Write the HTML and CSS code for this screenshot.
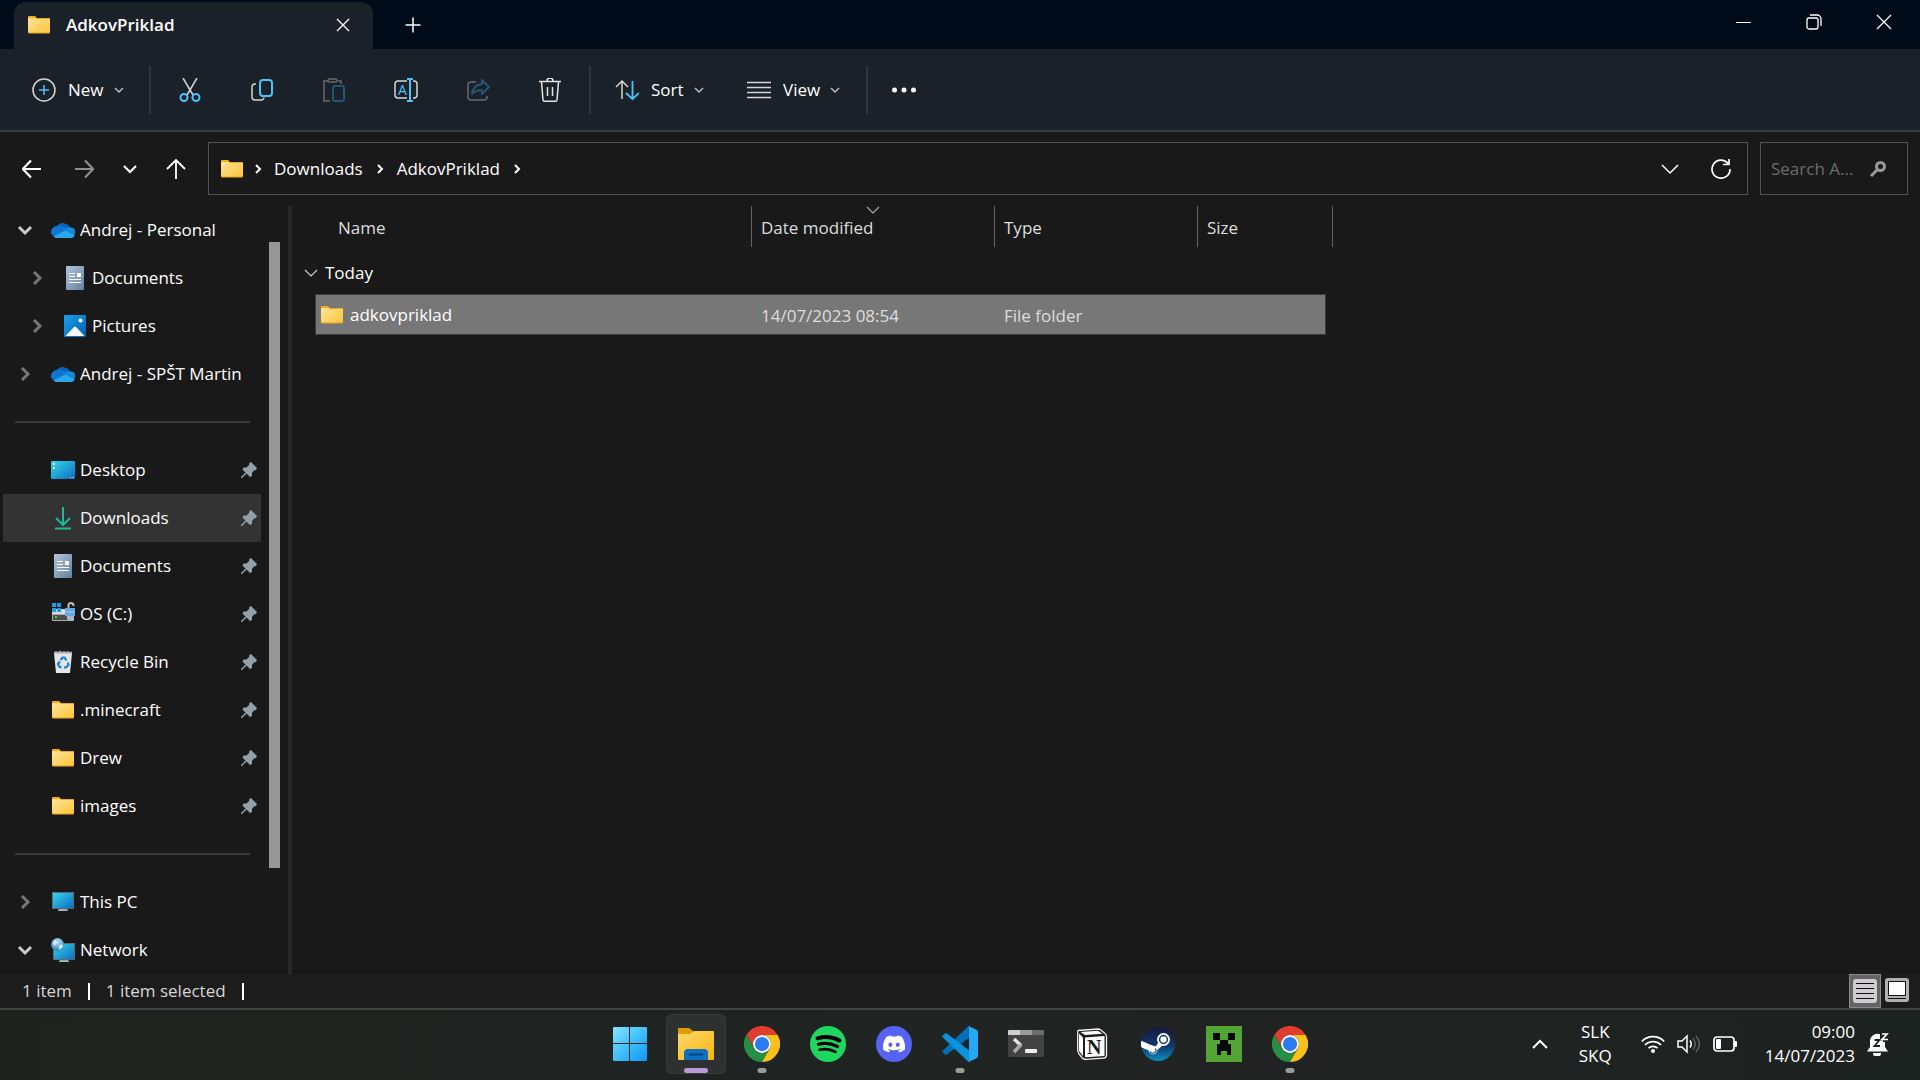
FILE: index.html
```html
<!DOCTYPE html>
<html lang="en">
<head>
<meta charset="utf-8">
<title>AdkovPriklad</title>
<link rel="stylesheet" href="styles.css">
</head>
<body>
<svg class="defs" aria-hidden="true">
  <defs>
    <linearGradient id="g-folder" x1="0" y1="0" x2="1" y2="1"><stop offset="0" stop-color="#ffe49c"/><stop offset="1" stop-color="#fdc536"/></linearGradient>
    <linearGradient id="g-screen" x1="0" y1="0" x2="1" y2="1"><stop offset="0" stop-color="#36d8ea"/><stop offset="1" stop-color="#0a6cc4"/></linearGradient>
    <linearGradient id="g-doc" x1="0" y1="0" x2="1" y2="1"><stop offset="0" stop-color="#b3c4dc"/><stop offset="1" stop-color="#63809f"/></linearGradient>
    <linearGradient id="g-pic" x1="0" y1="0" x2="1" y2="1"><stop offset="0" stop-color="#1aa0ea"/><stop offset="1" stop-color="#0560b0"/></linearGradient>
    <linearGradient id="g-win" x1="0" y1="0" x2="1" y2="1"><stop offset="0" stop-color="#8be3ff"/><stop offset=".5" stop-color="#40c0fb"/><stop offset="1" stop-color="#0d97f8"/></linearGradient>
    <linearGradient id="g-exp" x1="0" y1="0" x2="1" y2="1"><stop offset="0" stop-color="#ffd96e"/><stop offset="1" stop-color="#f8b50a"/></linearGradient>
    <linearGradient id="g-steam" x1="0" y1="0" x2="0" y2="1"><stop offset="0" stop-color="#14183c"/><stop offset=".55" stop-color="#10386c"/><stop offset="1" stop-color="#0c8cc0"/></linearGradient>
    <radialGradient id="g-globe" cx=".5" cy=".3" r=".7"><stop offset="0" stop-color="#b7e2f5"/><stop offset="1" stop-color="#2b7fb8"/></radialGradient>
    <clipPath id="c-steam"><circle cx="18" cy="18" r="17"/></clipPath>
  </defs>
  <symbol id="folder" viewBox="0 0 24 24">
    <path d="M1 4a1 1 0 0 1 1-1h6l2 2v4H1z" fill="#f8ae14"/>
    <rect x="1" y="5" width="22" height="15" rx="1" fill="url(#g-folder)"/>
    <path d="M9 5.500h13.500M1.500 20h21" stroke="#eba81a" fill="none"/>
  </symbol>
  <symbol id="cloud" viewBox="0 0 24 24">
    <path d="M5 9a8 7.500 0 0 1 14.500 1L13 16z" fill="#0c62b8"/>
    <path d="M6.500 8A6 6 0 0 0 1 17l3 2 12-6A9 9 0 0 0 6.500 8z" fill="#1076d2"/>
    <path d="M13 12q3-3.500 7-2.500a4.500 4.500 0 0 1 3.500 7.500z" fill="#1489dc"/>
    <path d="M2.500 18.500 14.500 12.500l9 4.500a3.500 3.500 0 0 1-3.500 3H6q-2 0-3.500-1.500z" fill="#2aa6ec"/>
  </symbol>
  <symbol id="doc" viewBox="0 0 24 24">
    <rect x="3" y="0" width="18" height="24" rx="1" fill="url(#g-doc)"/>
    <path d="M6 7.500h6M6 10.500h6M6 13.500h12M6 16.500h12" stroke="#fff"/><path d="M14 7h4v4h-4z" fill="#fff"/>
  </symbol>
  <symbol id="pic" viewBox="0 0 24 24">
    <rect x="1" y="1" width="22" height="22" rx="1" fill="url(#g-pic)"/>
    <path d="M2.500 22 11 13q1-1 2 0l8.500 9z" fill="#f4f8fe"/><circle cx="17.500" cy="6.500" r="2" fill="#fff"/>
  </symbol>
  <symbol id="desktop" viewBox="0 0 24 24">
    <rect x="0" y="3" width="24" height="18" rx="1" fill="url(#g-screen)"/>
    <path d="M2 5h2v2H2zM2 9h2v2H2z" fill="#fff"/><path d="M19 19.500h1M21.500 19.500h1" stroke="#d6efff"/>
  </symbol>
  <symbol id="down" viewBox="0 0 24 24">
    <path d="M12 1v18M5 12l7 7 7-7M4 22.500h16" fill="none" stroke="#22b893" stroke-width="2"/>
  </symbol>
  <symbol id="drive" viewBox="0 0 24 24">
    <path d="M1 7h22v6H1z" fill="#dadada"/><path d="M1.500 12.500h21v6h-21z" fill="#4c4c4c" stroke="#aaa"/>
    <path d="M1 1h4v4H1zM6 1h4v4H6zM1 6h4v4H1zM6 6h4v4H6z" fill="#1c9ce8"/><path d="M4 14h2v2H4z" fill="#35e03a"/>
    <path d="M17.500 6V3.500a2.500 2.500 0 0 1 5 0V4" fill="none" stroke="#b8bdc4" stroke-width="2"/>
    <rect x="14" y="6" width="10" height="8" fill="#5aaee6"/><path d="M14 9h10v2H14z" fill="#9cb6c9"/><path d="M16 14h7v3l-2 2h-3l-2-2z" fill="#aab6c2"/>
  </symbol>
  <symbol id="bin" viewBox="0 0 24 24">
    <path d="M3 3h18l-2 20H5z" fill="#e3e7eb"/><path d="M3 2l2-1 2 1 2-1.500 2 1.500 2-1 2 1 2-1 2 1 2-.5v2H3z" fill="#a9aeb4"/>
    <path d="M9.500 10l2-2.500h2l2 3M17 12.500l.5 2.500-2.500 2.500h-2M10.500 17.500 8 16.500l-1-2.500 2-2.500" fill="none" stroke="#1583d8" stroke-width="2.200"/>
  </symbol>
  <symbol id="pc" viewBox="0 0 24 24">
    <path d="M7 21h10v-1l-3-2h-4l-3 2z" fill="#9fb0bd"/><rect x="1.500" y="2.500" width="21" height="16" fill="url(#g-screen)" stroke="#5b6a74"/>
  </symbol>
  <symbol id="network" viewBox="0 0 24 24">
    <path d="M8 24h10v-1l-3-2h-4l-3 2z" fill="#9fb0bd"/><rect x="2.500" y="5.500" width="21" height="16" fill="url(#g-screen)" stroke="#5b6a74"/>
    <circle cx="6.500" cy="6.500" r="6.500" fill="url(#g-globe)"/><path d="M2 4l3-2 1 3-3 3zM8 8l3-2 1 3-4 3z" fill="#d9f1fa"/>
  </symbol>
  <symbol id="pin" viewBox="0 0 16 16">
    <path d="M10 0l6 6-1 2-2 .5-2 2.500V14l-2 1-3.500-3.500L1 16H0v-1l4.500-4.500L1.500 7.500l1-2h3L8 3l.5-2z" fill="#93a0a8"/>
  </symbol>
  <symbol id="chev-r" viewBox="0 0 16 16"><path d="M5 2l6 6-6 6" fill="none" stroke="currentColor" stroke-width="3"/></symbol>
  <symbol id="chev-d" viewBox="0 0 16 16"><path d="M2 5l6 6 6-6" fill="none" stroke="currentColor" stroke-width="3"/></symbol>
  <symbol id="thin-d" viewBox="0 0 16 16"><path d="M2 5l6 6 6-6" fill="none" stroke="currentColor" stroke-width="1.200"/></symbol>
  <symbol id="tiny-d" viewBox="0 0 16 16"><path d="M4 6l4 4 4-4" fill="none" stroke="#b9bcc1" stroke-width="1.500"/></symbol>
  <symbol id="crumb" viewBox="0 0 16 16"><path d="M6 4l4 4-4 4" fill="none" stroke="#fff" stroke-width="2"/></symbol>
  <symbol id="chrome" viewBox="0 0 48 48">
    <path d="M13.600 30 3.200 12a24 24 0 0 1 41.600 0H24a12 12 0 0 0-10.400 18z" fill="#e33b2e"/>
    <path d="M3.200 12A24 24 0 0 0 24 48l10.400-18a12 12 0 0 1-20.800 0z" fill="#259045"/>
    <path d="M34.400 30 24 48a24 24 0 0 0 20.800-36H24a12 12 0 0 1 10.400 18z" fill="#fbc116"/>
    <circle cx="24" cy="24" r="12" fill="#fff"/><circle cx="24" cy="24" r="9.500" fill="#2b7af0"/>
  </symbol>
</svg>

<header class="titlebar">
  <div class="tab">
    <svg class="ico"><use href="#folder"/></svg>
    <span class="tab-title">AdkovPriklad</span>
    <button class="plain tab-close" aria-label="Close tab"><svg class="s16" viewBox="0 0 16 16"><path d="M2 2l12 12M14 2 2 14" stroke="#fff" stroke-width="1.300"/></svg></button>
  </div>
  <button class="plain new-tab" aria-label="New tab"><svg class="s16" viewBox="0 0 16 16"><path d="M8 .5v15M.5 8h15" stroke="#fff" stroke-width="1.500"/></svg></button>
  <div class="win-controls">
    <button class="plain" aria-label="Minimize"><svg class="s16" viewBox="0 0 16 16"><path d="M0 8.500h15" stroke="#fff"/></svg></button>
    <button class="plain" aria-label="Restore"><svg class="s16" viewBox="0 0 16 16" fill="none" stroke="#fff" stroke-width="1.300"><rect x="1" y="4" width="11" height="11" rx="2"/><path d="M4 1h7a4 4 0 0 1 4 4v7"/></svg></button>
    <button class="plain" aria-label="Close"><svg class="s16" viewBox="0 0 16 16"><path d="M1 1l14 14M15 1 1 15" stroke="#fff" stroke-width="1.300"/></svg></button>
  </div>
</header>

<div class="toolbar" role="toolbar">
  <button class="plain cmd cmd-new"><svg class="ico" viewBox="0 0 24 24" fill="none" stroke="#d5d5d5" stroke-width="1.500"><circle cx="12" cy="12" r="11"/><path d="M12 7v10M7 12h10" stroke="#4cc2ff"/></svg><span>New</span><svg class="s16"><use href="#tiny-d"/></svg></button>
  <span class="sep"></span>
  <button class="plain tool" aria-label="Cut"><svg class="ico" viewBox="0 0 24 24" fill="none" stroke="#d5d5d5" stroke-width="1.500"><path d="M5 0l10 17M19 0 9 17"/><g stroke="#4cc2ff" stroke-width="2"><circle cx="6" cy="19.500" r="3.500"/><circle cx="18" cy="19.500" r="3.500"/></g></svg></button>
  <button class="plain tool" aria-label="Copy"><svg class="ico" viewBox="0 0 24 24" fill="none" stroke-width="2"><path d="M6 6H5a3 3 0 0 0-3 3v10a3 3 0 0 0 3 3h6a3 3 0 0 0 3-2.500" stroke="#d5d5d5" stroke-width="1.500"/><rect x="10" y="2" width="12" height="16" rx="3" stroke="#4cc2ff"/></svg></button>
  <button class="plain tool" aria-label="Paste" disabled><svg class="ico" viewBox="0 0 24 24" fill="none" stroke="#666b72" stroke-width="1.500"><path d="M6 3H2v20h6M16 3h3v3"/><rect x="6" y="1" width="9" height="3" rx="1.500"/><rect x="11" y="8" width="11" height="15" rx="2" stroke="#245674" stroke-width="2"/></svg></button>
  <button class="plain tool" aria-label="Rename"><svg class="ico" viewBox="0 0 24 24" fill="none" stroke="#d5d5d5" stroke-width="1.500"><path d="M13 3H4a3 3 0 0 0-3 3v11a3 3 0 0 0 3 3h9M19 3h1a3 3 0 0 1 3 3v11a3 3 0 0 1-3 3h-1"/><path d="M16 0v24M13 1h6M13 23h6" stroke="#4cc2ff" stroke-width="2"/><text x="4" y="17" class="glyph-a">A</text></svg></button>
  <button class="plain tool" aria-label="Share" disabled><svg class="ico" viewBox="0 0 24 24" fill="none" stroke="#666b72" stroke-width="1.500"><path d="M10 4H5a3 3 0 0 0-3 3v12a3 3 0 0 0 3 3h13a3 3 0 0 0 3-3v-1"/><path d="M16 2l7 7-7 7v-4q-6 0-10 4 1-9 10-10z" stroke="#245674" stroke-width="2" stroke-linejoin="round"/></svg></button>
  <button class="plain tool" aria-label="Delete"><svg class="ico" viewBox="0 0 24 24" fill="none" stroke="#e4e4e4" stroke-width="1.500"><path d="M1 3.500h22M3.500 4 5 22q.2 1.300 1.500 1.300h11q1.300 0 1.500-1.300L20.500 4M9 3a3 3 0 0 1 6 0M9.500 9v9M14.500 9v9"/></svg></button>
  <span class="sep"></span>
  <button class="plain cmd cmd-sort"><svg class="ico" viewBox="0 0 24 24" fill="none" stroke="#d5d5d5" stroke-width="1.500"><path d="M7 3v18M1 9l6-6 6 6"/><path d="M17.500 3v18M11 15l6.500 6 6.500-6" stroke="#4cc2ff" stroke-width="1.800"/></svg><span>Sort</span><svg class="s16"><use href="#tiny-d"/></svg></button>
  <button class="plain cmd cmd-view"><svg class="ico" viewBox="0 0 24 24" stroke="#d5d8d8" stroke-width="1.600"><path d="M0 4.500h24M0 9.500h24M0 14.500h24M0 19.500h24"/></svg><span>View</span><svg class="s16"><use href="#tiny-d"/></svg></button>
  <span class="sep"></span>
  <button class="plain tool more" aria-label="See more"><svg class="ico" viewBox="0 0 24 24" fill="#fff"><circle cx="2.500" cy="12" r="2.500"/><circle cx="12" cy="12" r="2.500"/><circle cx="21.500" cy="12" r="2.500"/></svg></button>
</div>

<div class="navrow">
  <div class="nav-buttons">
    <button class="plain" aria-label="Back"><svg class="s20" viewBox="0 0 20 20" fill="none" stroke="#fff" stroke-width="2.200"><path d="M1 10h18M9 1.500.8 10 9 18.500"/></svg></button>
    <button class="plain" aria-label="Forward" disabled><svg class="s20" viewBox="0 0 20 20" fill="none" stroke="#8e8e8e" stroke-width="2.200"><path d="M1 10h18M11 1.500l8.200 8.500-8.200 8.500"/></svg></button>
    <button class="plain small" aria-label="Recent locations"><svg class="s16" viewBox="0 0 16 16"><path d="M2 5l6 6 6-6" fill="none" stroke="#fff" stroke-width="2.200"/></svg></button>
    <button class="plain" aria-label="Up"><svg class="s20" viewBox="0 0 20 20" fill="none" stroke="#fff" stroke-width="1.800"><path d="M10 20V1M1 10l9-9 9 9"/></svg></button>
  </div>
  <div class="address">
    <svg class="ico"><use href="#folder"/></svg>
    <svg class="s16"><use href="#crumb"/></svg>
    <a href="#">Downloads</a>
    <svg class="s16"><use href="#crumb"/></svg>
    <a href="#">AdkovPriklad</a>
    <svg class="s16"><use href="#crumb"/></svg>
    <button class="plain history" aria-label="Previous locations"><svg class="s20" viewBox="0 0 20 20"><path d="M2 6l8 8 8-8" fill="none" stroke="#fff" stroke-width="1.500"/></svg></button>
    <button class="plain refresh" aria-label="Refresh"><svg class="s20" viewBox="0 0 20 20" fill="none" stroke="#fff" stroke-width="1.700"><path d="M17 4.500A9 9 0 1 0 19 10M18 0v5.500h-6"/></svg></button>
  </div>
  <div class="search">
    <input type="text" placeholder="Search A..." aria-label="Search AdkovPriklad">
    <svg class="s16" viewBox="0 0 16 16" fill="none" stroke="#999" stroke-width="3"><circle cx="10.500" cy="5.500" r="4"/><path d="M7.500 8.500 1 15"/></svg>
  </div>
</div>

<main class="explorer">
  <nav class="side" aria-label="Folders">
    <ul class="tree">
      <li class="row"><button class="plain twist open" aria-label="Collapse"><svg class="s16"><use href="#chev-d"/></svg></button><a href="#"><svg class="ico"><use href="#cloud"/></svg>Andrej - Personal</a></li>
      <li class="row child"><button class="plain twist" aria-label="Expand"><svg class="s16"><use href="#chev-r"/></svg></button><a href="#"><svg class="ico"><use href="#doc"/></svg>Documents</a></li>
      <li class="row child"><button class="plain twist" aria-label="Expand"><svg class="s16"><use href="#chev-r"/></svg></button><a href="#"><svg class="ico"><use href="#pic"/></svg>Pictures</a></li>
      <li class="row"><button class="plain twist" aria-label="Expand"><svg class="s16"><use href="#chev-r"/></svg></button><a href="#"><svg class="ico"><use href="#cloud"/></svg>Andrej - SPŠT Martin</a></li>
      <li class="row divider"></li>
      <li class="row leaf"><a href="#"><svg class="ico"><use href="#desktop"/></svg>Desktop</a><svg class="pin"><use href="#pin"/></svg></li>
      <li class="row leaf current"><a href="#"><svg class="ico"><use href="#down"/></svg>Downloads</a><svg class="pin"><use href="#pin"/></svg></li>
      <li class="row leaf"><a href="#"><svg class="ico"><use href="#doc"/></svg>Documents</a><svg class="pin"><use href="#pin"/></svg></li>
      <li class="row leaf"><a href="#"><svg class="ico"><use href="#drive"/></svg>OS (C:)</a><svg class="pin"><use href="#pin"/></svg></li>
      <li class="row leaf"><a href="#"><svg class="ico"><use href="#bin"/></svg>Recycle Bin</a><svg class="pin"><use href="#pin"/></svg></li>
      <li class="row leaf"><a href="#"><svg class="ico"><use href="#folder"/></svg>.minecraft</a><svg class="pin"><use href="#pin"/></svg></li>
      <li class="row leaf"><a href="#"><svg class="ico"><use href="#folder"/></svg>Drew</a><svg class="pin"><use href="#pin"/></svg></li>
      <li class="row leaf"><a href="#"><svg class="ico"><use href="#folder"/></svg>images</a><svg class="pin"><use href="#pin"/></svg></li>
      <li class="row divider"></li>
      <li class="row"><button class="plain twist" aria-label="Expand"><svg class="s16"><use href="#chev-r"/></svg></button><a href="#"><svg class="ico"><use href="#pc"/></svg>This PC</a></li>
      <li class="row"><button class="plain twist open" aria-label="Collapse"><svg class="s16"><use href="#chev-d"/></svg></button><a href="#"><svg class="ico"><use href="#network"/></svg>Network</a></li>
    </ul>
    <div class="scroll"><div class="thumb"></div></div>
  </nav>
  <section class="files">
    <table>
      <colgroup><col class="c-gutter"><col class="c-name"><col class="c-date"><col class="c-type"><col class="c-size"><col class="c-end"></colgroup>
      <thead>
        <tr><td></td><th scope="col" class="h-name">Name</th><th scope="col" class="sorted">Date modified<svg class="s16 sort-mark"><use href="#thin-d"/></svg></th><th scope="col">Type</th><th scope="col" colspan="2">Size</th></tr>
      </thead>
      <tbody>
        <tr class="group"><th colspan="6" scope="rowgroup"><button class="plain"><svg class="s16"><use href="#thin-d"/></svg>Today</button></th></tr>
        <tr class="file"><td></td><td class="f-name"><a href="#"><svg class="ico"><use href="#folder"/></svg>adkovpriklad</a></td><td>14/07/2023 08:54</td><td>File folder</td><td class="f-last"></td><td></td></tr>
      </tbody>
    </table>
  </section>
</main>

<div class="status">
  <span class="stat">1 item</span><span class="stat">1 item selected</span>
  <div class="views">
    <button class="plain view on" aria-label="Details view"><svg class="ico" viewBox="0 0 24 24"><rect width="24" height="24" rx="3" fill="#cfcccf"/><path d="M3 4.500h18M3 9.500h18M3 14.500h18M3 19.500h18" stroke="#111"/></svg></button>
    <button class="plain view icons" aria-label="Large icons view"><svg class="ico" viewBox="0 0 24 24"><rect width="24" height="24" rx="3" fill="#b0b0b0"/><rect x="3.500" y="3.500" width="17" height="14" fill="#fff" stroke="#111"/><path d="M3 20.500h18" stroke="#111"/></svg></button>
  </div>
</div>

<footer class="taskbar">
  <div class="apps">
    <button class="plain app" aria-label="Start"><svg class="s36" viewBox="0 0 36 36"><path d="M2 1h15v16H1V2q0-1 1-1zM18 1h16q1 0 1 1v15H18zM1 18h16v17H2q-1 0-1-1zM18 18h17v16q0 1-1 1H18z" fill="url(#g-win)"/></svg></button>
    <button class="plain app active" aria-label="File Explorer"><svg class="s36" viewBox="0 0 36 36"><path d="M0 3q0-1 1-1h10l4 3v4H0z" fill="#dd9d05"/><path d="M0 8h12l4-3h19q1 0 1 1v27q0 1-1 1H1q-1 0-1-1z" fill="url(#g-exp)"/><path d="M6 34v-7q0-4 4-4h16q4 0 4 4v7z" fill="#0f6fc0"/><path d="M11 28.500h14" stroke="#07427c" stroke-width="2"/></svg><i class="mark wide"></i></button>
    <button class="plain app" aria-label="Google Chrome"><svg class="s36"><use href="#chrome"/></svg><i class="mark"></i></button>
    <button class="plain app" aria-label="Spotify"><svg class="s36" viewBox="0 0 36 36"><circle cx="18" cy="18" r="18" fill="#1fd75f"/><g fill="none" stroke="#000" stroke-linecap="round"><path d="M7.500 12.300Q19 9 29.500 14.500" stroke-width="4"/><path d="M8.500 18.300Q18 15.800 27.500 20.500" stroke-width="3.200"/><path d="M9.500 23.800Q18 21.800 25.500 25.800" stroke-width="2.600"/></g></svg></button>
    <button class="plain app" aria-label="Discord"><svg class="s36" viewBox="0 0 36 36"><circle cx="18" cy="18" r="18" fill="#5763f2"/><path transform="translate(7 6.800) scale(.92)" fill="#fff" d="M20.317 4.370a19.791 19.791 0 00-4.885-1.515.074.074 0 00-.079.037c-.211.375-.445.865-.608 1.250-1.845-.276-3.680-.276-5.487 0-.164-.393-.406-.874-.618-1.250a.077.077 0 00-.079-.037 19.736 19.736 0 00-4.885 1.515.070.070 0 00-.032.028C.533 9.046-.319 13.580.099 18.058a.082.082 0 00.031.056c2.053 1.508 4.041 2.423 5.993 3.029a.078.078 0 00.084-.028c.462-.630.873-1.295 1.226-1.994a.076.076 0 00-.042-.106c-.653-.248-1.274-.550-1.872-.892a.077.077 0 01-.008-.128c.126-.094.252-.192.372-.291a.074.074 0 01.078-.011c3.928 1.793 8.180 1.793 12.061 0a.074.074 0 01.079.010c.120.099.246.198.373.292a.077.077 0 01-.007.128 12.299 12.299 0 01-1.873.891.077.077 0 00-.041.107c.360.698.772 1.363 1.225 1.993a.076.076 0 00.084.029c1.961-.607 3.950-1.522 6.002-3.029a.077.077 0 00.031-.055c.500-5.177-.838-9.674-3.549-13.660a.061.061 0 00-.031-.029zM8.020 15.331c-1.183 0-2.157-1.086-2.157-2.419 0-1.333.956-2.419 2.157-2.419 1.211 0 2.176 1.095 2.157 2.419 0 1.333-.956 2.419-2.157 2.419zm7.975 0c-1.183 0-2.157-1.086-2.157-2.419 0-1.333.955-2.419 2.157-2.419 1.211 0 2.176 1.095 2.157 2.419 0 1.333-.946 2.419-2.157 2.419z"/></svg></button>
    <button class="plain app" aria-label="Visual Studio Code"><svg class="s36" viewBox="0 0 36 36"><path d="M26.500 0 .8 24.500q-1 1 0 2L3 28.600q1 .8 2 0L28 11z" fill="#0070b8"/><path d="M26.500 36 .8 11.500q-1-1 0-2L3 7.400q1-.8 2 0L28 25z" fill="#0a93dc"/><path d="M26.500 0 34.500 3.700q1.500.8 1.500 2.500v23.600q0 1.700-1.500 2.500L26.500 36q-1.500 0 .5-2V2q-1-1.500-.5-2z" fill="#26a9f4"/></svg><i class="mark"></i></button>
    <button class="plain app" aria-label="Terminal"><svg class="s36" viewBox="0 0 36 36"><rect y="4" width="36" height="27" rx="2" fill="#434343"/><path d="M0 9V5q0-1 1-1h11v5z" fill="#cfcfcf"/><path d="M12 4h12v5H12z" fill="#9b9b9b"/><path d="M24 4h11q1 0 1 1v4H24z" fill="#6d6d6d"/><path d="M6 13l7 6.500" stroke="#e6e6e6" stroke-width="3.500"/><path d="M13 18.500 6 26" stroke="#aaa" stroke-width="3.500"/><rect x="17" y="23" width="12" height="4" rx="1" fill="#f0f0f0"/></svg></button>
    <button class="plain app" aria-label="Notion"><svg class="s36" viewBox="0 0 36 36"><path d="M4 4.500 24 3q1.500 0 2.500.8L31 7.500q1.500 1 1.500 3V29q0 3-3 3.200L11.500 33.300q-2 0-3.200-1.300L5 27.800Q3.700 26 3.700 24V6q0-1.300.3-1.500z" fill="#1d1d1d" stroke="#eee" stroke-width="1.300"/><path d="M6.500 6 24 4.700l4.500 3L11 9z" fill="#fff"/><path d="M5 7.500l4 4V30l-4-5z" fill="#fff"/><path d="M11 11.500 30.500 10v20L11 31.200z" fill="#fff"/><text x="13" y="27.500" class="glyph-n">N</text></svg></button>
    <button class="plain app" aria-label="Steam"><svg class="s36" viewBox="0 0 36 36"><circle cx="18" cy="18" r="17" fill="url(#g-steam)"/><g clip-path="url(#c-steam)"><path d="M0 17.500 14 23.500" stroke="#fff" stroke-width="6"/><path d="M14 22.500 19 16l3 4-6 5z" fill="#fff"/></g><circle cx="13" cy="24" r="4.300" fill="#fff"/><path d="M10 25.500a3 3 0 0 0 5.500-3" fill="none" stroke="#14507f" stroke-width="1.200"/><circle cx="23.500" cy="13.500" r="6.500" fill="#fff"/><circle cx="23.500" cy="13.500" r="3.900" fill="#fff" stroke="#14386a" stroke-width="1.500"/></svg></button>
    <button class="plain app" aria-label="Minecraft"><svg class="s36" viewBox="0 0 36 36"><path d="M0 0h36v36H0z" fill="#53a535"/><path d="M7 7h7v7H7zM22 7h7v7h-7zM14 14h8v4h3v11h-4v-4h-6v4h-4V18h3z" fill="#050805"/></svg></button>
    <button class="plain app" aria-label="Google Chrome, second profile"><svg class="s36"><use href="#chrome"/></svg><i class="mark"></i></button>
  </div>
  <div class="tray">
    <button class="plain expand" aria-label="Show hidden icons"><svg class="s16" viewBox="0 0 16 16"><path d="M1 12l7-7 7 7" fill="none" stroke="#fff" stroke-width="2"/></svg></button>
    <button class="plain lang">SLK<br>SKQ</button>
    <button class="plain quick" aria-label="Network, volume and battery">
      <svg class="ico" viewBox="0 0 24 24" fill="none" stroke="#fff" stroke-width="1.700"><path d="M.8 9.500a15.500 15.500 0 0 1 22.400 0M4 13a11 11 0 0 1 16 0M7.500 16.200a6.500 6.500 0 0 1 9 0"/><circle cx="12" cy="19" r="2" fill="#fff" stroke="none"/></svg>
      <svg class="ico" viewBox="0 0 24 24" fill="none" stroke="#fff" stroke-width="1.500"><path d="M1 9h4l5-5v16l-5-5H1zM13 8.500q2.500 3.500 0 7"/><path d="M16 6.500q4.500 5.500 0 11M19 4q7 8 0 16" stroke="#5d615f"/></svg>
      <svg class="ico" viewBox="0 0 24 24"><rect x="1" y="5" width="20" height="14" rx="3" fill="none" stroke="#fff" stroke-width="1.700"/><rect x="3" y="7" width="5" height="10" rx="1" fill="#fff"/><path d="M21 9h2q1 0 1 1v4q0 1-1 1h-2z" fill="#fff"/></svg>
    </button>
    <button class="plain clock">09:00<br>14/07/2023</button>
    <button class="plain bell" aria-label="Notifications"><svg class="ico" viewBox="0 0 24 24"><path d="M0 19.500 3 15V10a7.500 7.500 0 0 1 9-8h4v8h2v5l3 4.500z" fill="#fff"/><path d="M6 21h8a4 4 0 0 1-8 0z" fill="#fff"/><path d="M7.500 8h5l-5 6h5.500" fill="none" stroke="#1d2320" stroke-width="1.800"/><path d="M13 .5h9v8h-9z" fill="#1d2320"/><path d="M15 2h5L15 7.500h6" fill="none" stroke="#fff" stroke-width="1.700"/></svg></button>
  </div>
</footer>
</body>
</html>
```
FILE: styles.css
```css
* { box-sizing: border-box; }

body {
  margin: 0;
  min-height: 100vh;
  display: flex;
  flex-direction: column;
  background: #191919;
  color: #fff;
  font: 17px/24px "Open Sans", "Noto Sans", sans-serif;
}

a { color: inherit; text-decoration: none; }

.defs { position: absolute; width: 0; height: 0; }
svg { flex: none; display: block; }
.ico { width: 24px; height: 24px; }
.s16 { width: 16px; height: 16px; }
.s20 { width: 20px; height: 20px; }
.s36 { width: 36px; height: 36px; }

.plain {
  margin: 0;
  padding: 0;
  border: 0;
  background: none;
  color: inherit;
  font: inherit;
  display: flex;
  align-items: center;
  justify-content: center;
}

/* Title bar */
.titlebar { display: flex; height: 49px; padding-left: 14px; background: #000b1a; }
.tab {
  display: flex;
  align-items: center;
  width: 359px;
  margin-top: 2px;
  padding: 0 22px 2px 13px;
  border-radius: 12px 12px 0 0;
  background: #1b2128;
}
.tab-title { margin-left: 15px; font-weight: 600; font-size: 17px; }
.tab-close { margin-left: auto; }
.new-tab { width: 80px; }
.win-controls { display: flex; height: 43px; margin-left: auto; padding-right: 1px; }
.win-controls .plain { width: 70px; }

/* Command bar */
.toolbar {
  display: flex;
  align-items: center;
  height: 83px;
  padding-left: 32px;
  border-bottom: 2px solid #3b3b3b;
  background: #1b2129;
}
.sep { width: 2px; height: 48px; background: #30363d; }
.tool { width: 72px; height: 48px; }
.sep + .tool { margin-left: 3px; }
.toolbar .more { margin-left: 0; }
.cmd span { margin: 0 7px 0 12px; }
.cmd-new { width: 117px; justify-content: flex-start; }
.tool + .sep { margin-left: 3px; }
.cmd-sort { width: 132px; padding-left: 24px; justify-content: flex-start; }
.cmd-view { width: 143px; padding-left: 24px; justify-content: flex-start; }
.glyph-a { font: 14px "Open Sans", sans-serif; fill: #4cc2ff; stroke: #4cc2ff; stroke-width: 0; }

/* Navigation row */
.navrow { display: flex; height: 74px; padding: 10px 12px 11px 6px; }
.nav-buttons { display: flex; width: 202px; }
.nav-buttons .plain { width: 52px; }
.nav-buttons .small { width: 40px; }
.address {
  flex: 1;
  display: flex;
  align-items: center;
  padding: 0 16px 0 11px;
  border: 1px solid #535353;
}
.address .s16 { margin: 0 9px; }
.address .s16:nth-of-type(2) { margin: 0 8px 0 6px; }
.history { margin-left: auto; }
.refresh { margin-left: 31px; }
.search {
  display: flex;
  align-items: center;
  width: 148px;
  margin-left: 12px;
  padding: 0 21px 0 10px;
  border: 1px solid #535353;
}
.search input {
  flex: 1;
  min-width: 0;
  padding: 0;
  border: 0;
  outline: 0;
  background: none;
  color: #fff;
  font: inherit;
}
.search input::placeholder { color: #6d6d6d; opacity: 1; }

/* Folder tree */
.explorer { flex: 1; display: flex; }
.side { display: flex; width: 292px; border-right: 4px solid #272727; }
.tree { width: 261px; margin: 0; padding: 0 0 0 3px; list-style: none; }
.row { display: flex; align-items: center; height: 48px; padding: 0 4px 0 14px; }
.row a { display: flex; align-items: center; gap: 5px; white-space: nowrap; }
.child { padding-left: 26px; }
.leaf { padding-left: 48px; }
.current { background: #333; }
.twist { width: 16px; margin-right: 18px; color: #767676; }
.open { color: #ccc; }
.pin { width: 16px; height: 16px; margin-left: auto; }
.divider { padding: 0 11px 0 12px; }
.divider::before { content: ""; flex: 1; height: 2px; background: #3b3b3b; }
.scroll { display: flex; width: 19px; padding: 36px 0 106px 8px; }
.thumb { width: 11px; background: #969696; }

/* File list */
.files { flex: 1; min-width: 0; padding-left: 11px; }
.files table { table-layout: fixed; width: 1030px; border-collapse: separate; border-spacing: 0; }
.files th, .files td { padding: 0; font-weight: 400; text-align: left; }
.c-gutter { width: 12px; }
.c-name { width: 437px; }
.c-date { width: 243px; }
.c-type { width: 203px; }
.c-size { width: 128px; }
.c-end { width: 7px; }
.files thead th { height: 41px; padding: 2px 0 0 9px; border-right: 1px solid #636363; color: #dedede; }
.files thead .h-name { padding-left: 23px; }
.files .sorted { position: relative; }
.sort-mark { position: absolute; top: -4px; left: 113px; color: #aaa; }
.files .group th { height: 47px; padding-top: 4px; }
.group .plain { gap: 6px; }
.group svg { color: #ccc; }
.file td { height: 41px; color: #dedede; }
.files .file td:nth-child(n+2):nth-child(-n+5) {
  padding: 2px 0 0 9px;
  border: solid #3d3d3d;
  border-width: 1px 0;
  background: #777;
}
.files .file td.f-name:nth-child(2) { padding: 0 0 0 4px; color: #fff; border-left-width: 1px; }
.files .file td.f-last:nth-child(5) { border-right-width: 1px; }
.f-name a { display: flex; align-items: center; gap: 6px; }

/* Status bar */
.status {
  display: flex;
  align-items: center;
  height: 36px;
  padding: 0 10px 0 22px;
  border-bottom: 2px solid #434543;
  background: #1c1c1c;
  color: #d6d6d6;
}
.stat { display: flex; align-items: center; }
.stat::after { content: ""; width: 2px; height: 17px; margin: 0 16px; background: #fff; }
.views { display: flex; align-items: center; margin-left: auto; align-self: stretch; gap: 3px; }
.view { width: 26px; height: 34px; }
.view.on { width: 32px; border: 1px solid #8a8a8a; background: #646464; }
.view.icons { padding-bottom: 3px; }

/* Taskbar */
.taskbar {
  display: grid;
  grid-template-columns: 1fr auto 1fr;
  align-items: center;
  height: 70px;
  padding-bottom: 2px;
  background: linear-gradient(90deg, #1e2320, #1f2422 40%, #212322 65%, #1d2321);
}
.apps { display: flex; gap: 6px; grid-column: 2; }
.app { position: relative; width: 60px; height: 60px; border-radius: 6px; }
.app.active { border: 1px solid #393e3c; background: #2d3230; }
.mark {
  position: absolute;
  bottom: 1px;
  left: 50%;
  width: 9px;
  height: 5px;
  border-radius: 3px;
  background: #9a9c9b;
  transform: translateX(-50%);
}
.mark.wide { bottom: 0; width: 24px; background: #b99ad8; }
.tray { display: flex; align-items: center; justify-content: flex-end; padding-right: 29px; }
.expand { margin-right: 31px; }
.lang { margin-right: 29px; text-align: center; }
.quick { gap: 12px; margin-right: 28px; }
.clock { margin-right: 12px; text-align: right; }
.glyph-n { font: bold 20px "Liberation Serif", serif; fill: #1d1d1d; }
```
